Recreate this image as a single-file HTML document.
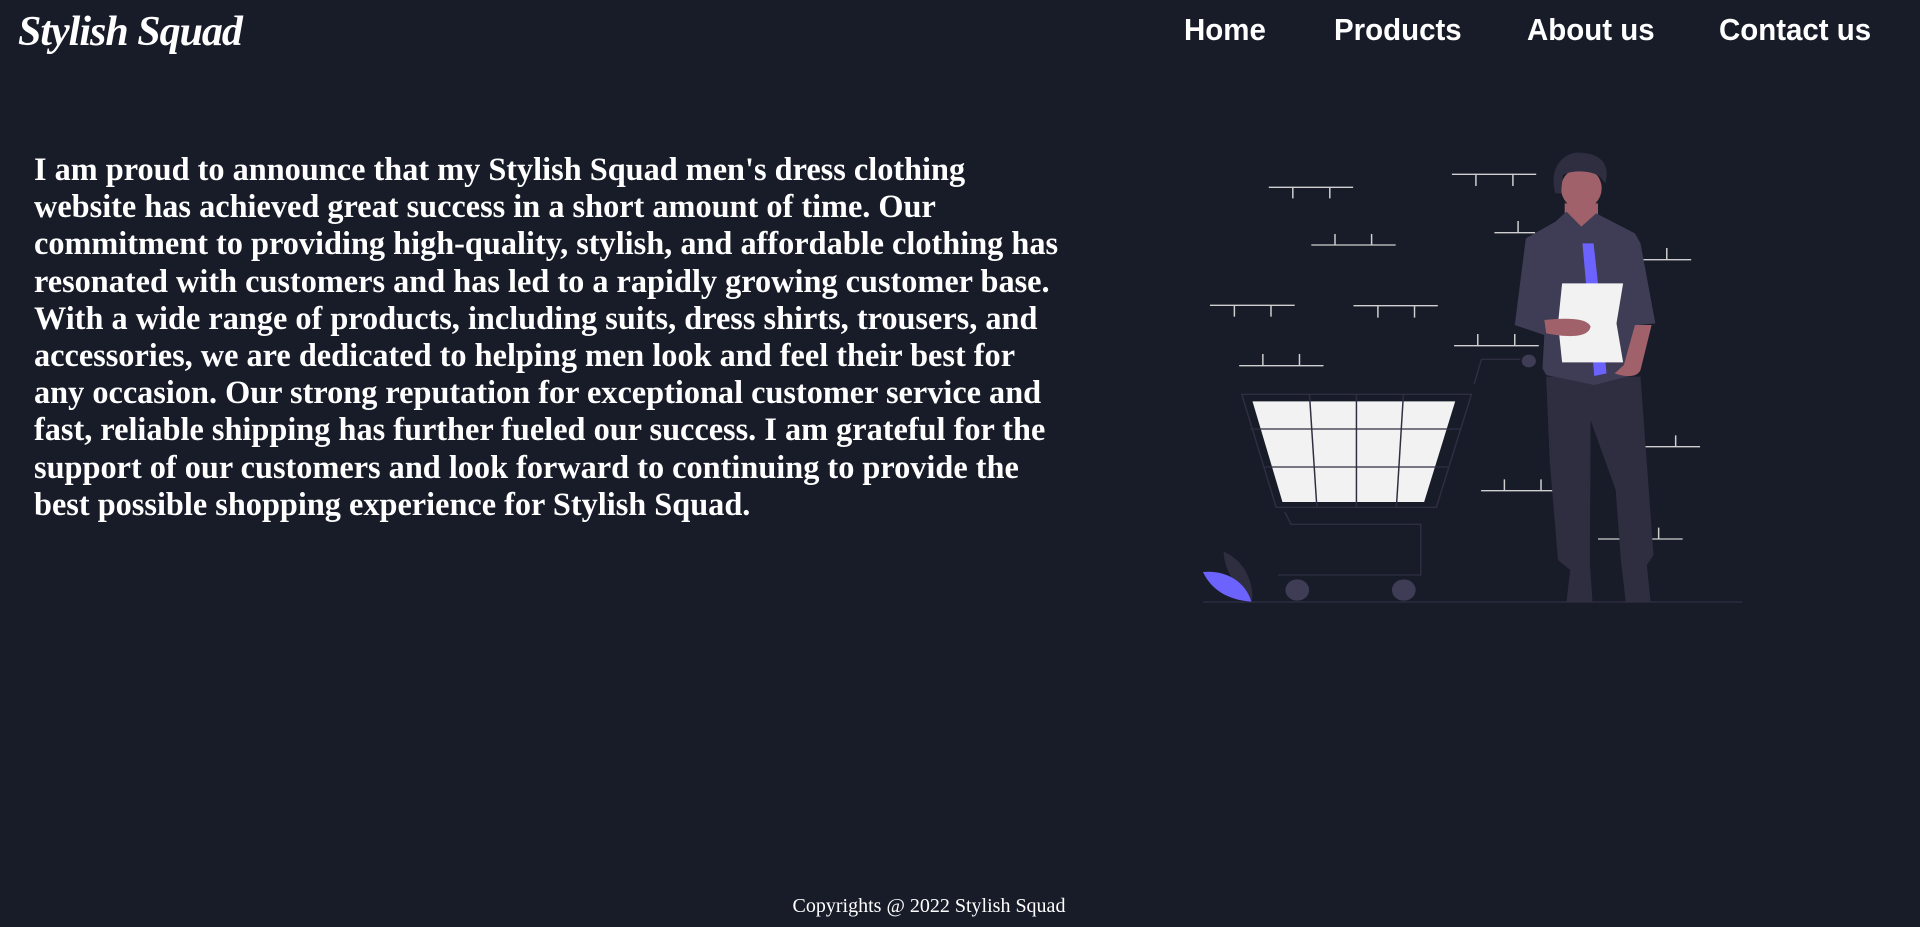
<!DOCTYPE html>
<html><head><meta charset="utf-8"><style>
html,body{margin:0;padding:0;background:#181c29;width:1920px;height:927px;overflow:hidden;color:#fff}
.logo{position:absolute;left:18px;top:8px;font-family:"Liberation Serif",serif;font-style:italic;font-weight:bold;font-size:42px;letter-spacing:-1px}
.nav{position:absolute;top:12px;font-family:"Liberation Sans",sans-serif;font-weight:bold;font-size:31px;transform-origin:left top;transform:scaleX(0.95)}
p.t{position:absolute;left:34px;top:151px;margin:0;white-space:nowrap;font-family:"Liberation Serif",serif;font-weight:bold;font-size:32.3px;line-height:37.2px}
.f{position:absolute;left:0;width:1858px;text-align:center;top:895px;font-family:"Liberation Serif",serif;font-size:20px}
svg{position:absolute;left:1180px;top:130px}
</style></head><body>
<div class="logo">Stylish Squad</div>
<div class="nav" style="left:1184px">Home</div>
<div class="nav" style="left:1334px">Products</div>
<div class="nav" style="left:1527px">About us</div>
<div class="nav" style="left:1719px">Contact us</div>
<p class="t">I am proud to announce that my Stylish Squad men's dress clothing<br>website has achieved great success in a short amount of time. Our<br>commitment to providing high-quality, stylish, and affordable clothing has<br>resonated with customers and has led to a rapidly growing customer base.<br>With a wide range of products, including suits, dress shirts, trousers, and<br>accessories, we are dedicated to helping men look and feel their best for<br>any occasion. Our strong reputation for exceptional customer service and<br>fast, reliable shipping has further fueled our success. I am grateful for the<br>support of our customers and look forward to continuing to provide the<br>best possible shopping experience for Stylish Squad.</p>
<svg width="580" height="490" viewBox="0 0 1568 1470" preserveAspectRatio="none">
<g stroke="#cfcfcf" stroke-width="4" fill="none">
<path d="M240 172H468M305 172V205M405 172V205"/>
<path d="M355 345H583M419 345V312M518 345V312"/>
<path d="M81 526H310M147 526V560M246 526V560"/>
<path d="M469 527H697M535 527V563M634 527V563"/>
<path d="M160 707H388M224 707V672M323 707V672"/>
<path d="M735 133H963M800 133V168M900 133V168"/>
<path d="M850 308H960M914 308V273"/>
<path d="M1240 389H1382M1316 389V354"/>
<path d="M741 647H970M805 647V612M905 647V612"/>
<path d="M1250 950H1406M1340 950V916"/>
<path d="M814 1082H1010M877 1082V1048M976 1082V1048"/>
<path d="M1130 1227H1359M1294 1227V1193"/>
</g>
<path d="M62 1416H1521" stroke="#2f2e41" stroke-width="4"/>
<path d="M118 1265C170 1290 200 1350 195 1415C160 1380 120 1330 118 1265Z" fill="#2f2e41"/>
<path d="M62 1326C120 1320 175 1350 193 1415C130 1410 85 1380 62 1326Z" fill="#6c63ff"/>
<polygon points="196,814 744,814 660,1116 277,1116" fill="#f2f2f2"/>
<g stroke="#2f2e41" stroke-width="4" fill="none">
<polygon points="167,793 788,793 693,1132 260,1132"/>
<path d="M190 897H760M225 1011H727M350 793L370 1132M477 793V1132M604 793L585 1132"/>
<path d="M795 763L815 688H920M283 1145L300 1183H651V1335H265"/>
</g>
<circle cx="943" cy="693" r="19" fill="#3f3d56"/>
<circle cx="317" cy="1380" r="32" fill="#3f3d56"/>
<circle cx="605" cy="1380" r="32" fill="#3f3d56"/>
<path d="M990 740H1245L1262 1000L1280 1275L1262 1305L1272 1415H1205L1192 1290L1178 1080L1110 870L1108 1300L1115 1415H1045L1055 1320L1022 1290L1000 1000Z" fill="#2f2e41"/>
<path d="M1040 220H1130V300H1040Z" fill="#a0616a"/>
<path d="M1045 245L1085 290L1125 250L1230 310L1245 340L1285 580L1240 585L1225 735L1120 765L990 735L980 715L985 615L905 585L935 325L1015 275Z" fill="#3f3d56"/>
<path d="M1088 340H1118L1130 460L1153 730L1120 738Z" fill="#6c63ff"/>
<ellipse cx="1085" cy="175" rx="55" ry="62" fill="#a0616a"/>
<path d="M1015 190C995 110 1040 65 1080 68C1130 70 1165 95 1150 160L1135 140C1110 120 1060 120 1035 135L1030 190Z" fill="#2f2e41"/>
<path d="M1033 460H1198L1180 580L1198 697H1033L1022 580Z" fill="#f2f2f2"/>
<path d="M985 570C1030 565 1100 560 1110 590C1105 620 1060 625 990 610Z" fill="#a0616a"/>
<path d="M1230 585L1275 585L1245 720C1235 745 1200 740 1175 730L1200 705Z" fill="#a0616a"/>
</svg>
<div class="f">Copyrights @ 2022 Stylish Squad</div>
</body></html>
